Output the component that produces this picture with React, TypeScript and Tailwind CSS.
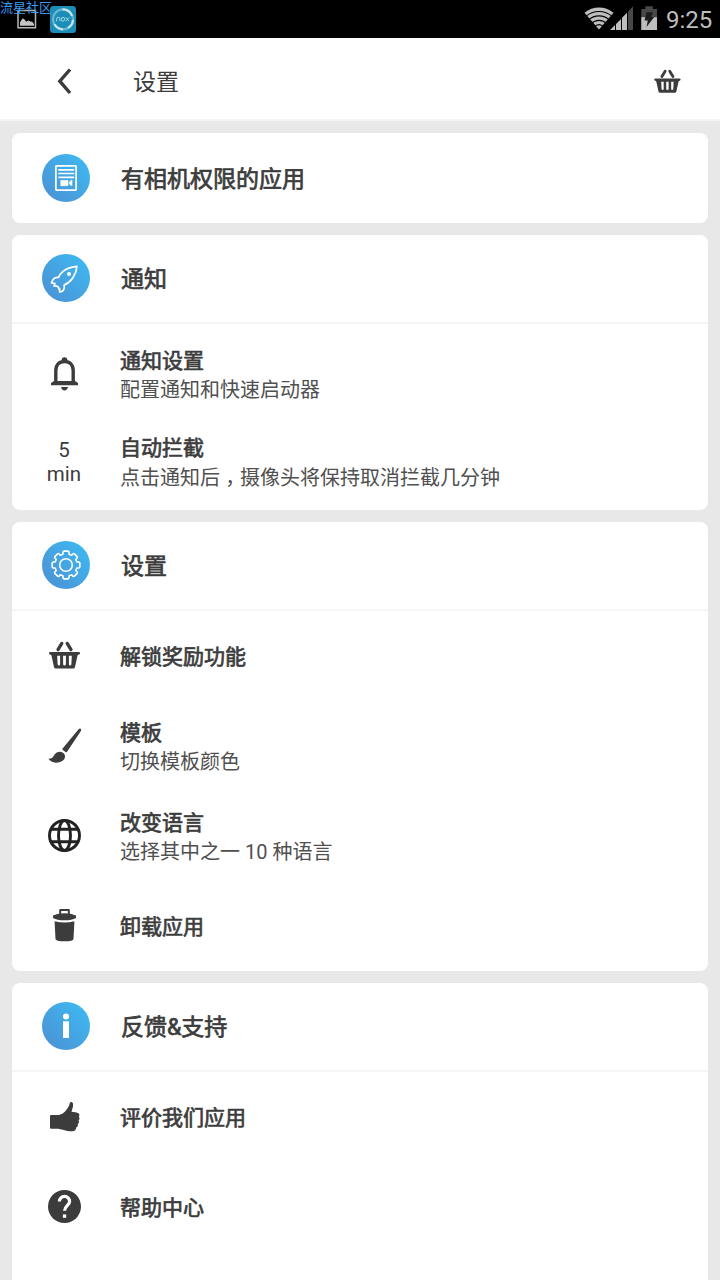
import type { ReactNode } from "react";

type RowProps = {
  icon: ReactNode;
  title: string;
  detail?: ReactNode;
  className?: string;
};

function toothPoint(radius: number, deg: number) {
  const a = (deg * Math.PI) / 180;
  return `${(24 + radius * Math.cos(a)).toFixed(2)} ${(24 + radius * Math.sin(a)).toFixed(2)}`;
}

const GEAR_PATH =
  Array.from({ length: 8 }, (_, i) => {
    const d = i * 45;
    return `${i === 0 ? "M" : "L"}${toothPoint(11.4, d - 15)} L${toothPoint(12.8, d - 13.5)} Q${toothPoint(14, d - 13)} ${toothPoint(14, d - 8)} L${toothPoint(14, d + 8)} Q${toothPoint(14, d + 13)} ${toothPoint(12.8, d + 13.5)} L${toothPoint(11.4, d + 15)} Q${toothPoint(10.8, d + 22.5)} ${toothPoint(11.4, d + 30)}`;
  }).join(" ") + "Z";

function BasketIcon({ className }: { className: string }) {
  return (
    <svg viewBox="0 0 40 40" className={className}>
      <path d="M14 13.600 17.800 7.400M27 13.600 23.200 7.400" stroke="#3c3c3c" strokeWidth="3.300" strokeLinecap="round" />
      <path
        fill="#3c3c3c"
        fillRule="evenodd"
        d="M6.200 16h28.600q1.200 0 1.200 1.200T34.800 18.600l-1.200.7-2.600 11.800q-.3 1.500-1.800 1.500H11.800q-1.500 0-1.800-1.500L7.400 19.300l-1.200-.7Q5 18.400 5 17.200T6.200 16ZM13.200 19.800l.4 8.200q.2 1.500 1.300 1.500t1.200-1.500v-8.200ZM19.100 19.800v8.200q0 1.500 1.400 1.500t1.400-1.500v-8.200ZM24.900 19.800v8.200q.1 1.500 1.200 1.500t1.300-1.500l.4-8.200Z"
      />
    </svg>
  );
}

function BellIcon() {
  return (
    <svg viewBox="0 0 40 40" className="size-10">
      <circle cx="20.500" cy="6" r="2.800" fill="#3c3c3c" />
      <path d="M11.800 28V16.500c0-5.800 3.400-9 8.700-9s8.700 3.200 8.700 9V28" fill="none" stroke="#3c3c3c" strokeWidth="3.400" />
      <path d="M10 27h21l3 2v2.300H7V29z" fill="#3c3c3c" />
      <path d="M17 33h7q-.8 3.400-3.500 3.400T17 33Z" fill="#3c3c3c" />
    </svg>
  );
}

function BrushIcon() {
  return (
    <svg viewBox="0 0 40 40" className="size-10" fill="#3c3c3c">
      <path d="M34.600 3.200q1.200-1.200 2.100-.5.900.8.200 2.200L23.200 25.600q-.6 1-1.700.3l-2.600-1.800q-1-.8-.3-1.700Z" />
      <path d="M4.300 32.700c3 .2 4.300-1 5.600-3.300 1.800-3.300 6-4.800 9-2.700 3 2.100 2.800 5.900-.3 8.100-4 2.900-10.700 2.500-14.300-2.100Z" />
    </svg>
  );
}

function GlobeIcon() {
  return (
    <svg viewBox="0 0 40 40" className="size-10" fill="none" stroke="#222" strokeWidth="2.900">
      <circle cx="20.500" cy="19.500" r="15" />
      <ellipse cx="20.500" cy="19.500" rx="6" ry="15" />
      <path d="M7 13.300h27M7 25.700h27" />
    </svg>
  );
}

function TrashIcon() {
  return (
    <svg viewBox="0 0 40 40" className="size-10" fill="#3c3c3c">
      <path d="M16.200 8.500V4h8.600v4.500" fill="none" stroke="#3c3c3c" strokeWidth="2" strokeLinejoin="round" />
      <path d="M9 9.600Q14 7.300 20.500 7.300T32 9.600v2.300q-4 2.300-11.500 2.300T9 11.900Z" />
      <path d="M10.600 15.300q5 1.200 9.900 1.200t9.900-1.200L29.500 33q-.2 2.300-9 2.300t-9-2.300Z" />
    </svg>
  );
}

function ThumbIcon() {
  return (
    <svg viewBox="0 0 40 40" className="size-10" fill="#3c3c3c">
      <path d="M6 19q0-1 1-1h6.500c4 0 7-2.600 9-5.300 1.400-2 2.500-3.600 3.100-6 .4-1.500 1.600-2.200 2.700-1.200 1.500 1.400.7 4.800-.8 9.200 2.700.2 5.600.9 7 1.600 1.200.8 1.100 2.600.3 3.400 1.200 1.300.7 3-.2 3.700.8 1.400.3 2.900-.9 3.600.6 1.500 0 2.800-1.300 3.300-.2 2.400-1.600 3.900-3.900 4-6.700.1-11.500-2.600-15.500-2.600H7q-1 0-1-1Z" />
    </svg>
  );
}

function HelpIcon() {
  return (
    <svg viewBox="0 0 40 40" className="size-10">
      <circle cx="20.500" cy="19.500" r="16.500" fill="#3c3c3c" />
      <path d="M15.400 14.500a5.100 5.100 0 1 1 10.200 0c0 3.600-5 4.200-5 9.200" fill="none" stroke="#fff" strokeWidth="3.200" />
      <path d="M18.900 27.400h3.300v3.400h-3.300z" fill="#fff" />
    </svg>
  );
}

function Badge({ children }: { children: ReactNode }) {
  return (
    <div className="mr-[31px] ml-[30px] size-12 shrink-0 rounded-full bg-linear-to-tr from-[#4a8fd2] to-[#3bbcf4]">
      <svg viewBox="0 0 48 48" className="size-12" fill="none" stroke="#fff" strokeLinejoin="round" strokeLinecap="round">
        {children}
      </svg>
    </div>
  );
}

function SectionHead({ icon, title }: { icon: ReactNode; title: string }) {
  return (
    <div className="flex h-[89px] items-center border-b-2 border-[#f5f5f5] pb-px">
      <Badge>{icon}</Badge>
      <h2 className="pt-1 text-[23px] leading-8 [-webkit-text-stroke:0.7px]">{title}</h2>
    </div>
  );
}

function Row({ icon, title, detail, className = "h-[90px]" }: RowProps) {
  return (
    <div className={`flex items-center ${className}`}>
      <div className="mr-1 flex w-[104px] shrink-0 justify-center">{icon}</div>
      <div className="pt-0.5">
        <div className="text-[21px] leading-[29px] [-webkit-text-stroke:0.7px]">{title}</div>
        {detail && <div className="text-[20px] leading-7 text-[#505050]">{detail}</div>}
      </div>
    </div>
  );
}

function StatusBar() {
  return (
    <div className="relative flex h-[38px] shrink-0 items-start justify-between bg-black">
      <svg viewBox="0 0 80 38" className="h-[38px] w-20">
        <path d="M18 10.500h17.500v17.300H18z" fill="none" stroke="#b8b8b8" strokeWidth="1.500" />
        <path d="M20 25.700v-3.500l2.600-3.600 1.400.4 2.400 2.800 2.100-1.300 2.300 1.200 1.200-.2 2 2.500v1.700Z" fill="#c4c4c4" />
        <rect x="50" y="6" width="26" height="27" rx="3.500" fill="#1b8eb7" />
        <circle cx="63" cy="19.300" r="10" fill="none" stroke="#67b5d0" strokeWidth="2.200" />
        <path d="M62.500 9.300A10 10 0 0 1 72 16M73 20a10 10 0 0 1-5 8M63 29.300a10 10 0 0 1-8.500-5" fill="none" stroke="#c9e4ee" strokeWidth="2.200" />
        <path d="M56.600 21.200v-2q0-1.900 1.700-1.900t1.700 1.900v2M63 17.300q1.600 0 1.600 1.900T63 21.200t-1.600-2 1.600-1.900ZM65.500 17.300l3.500 3.900M69.200 17.300l-3.500 3.900" fill="none" stroke="#a5d6e7" strokeWidth="1" />
      </svg>
      <div className="flex">
        <svg viewBox="580 0 80 38" className="h-[38px] w-20">
          <path d="M599 29.500 584.500 12.700Q591 7.500 599 7.500t14.500 5.200Z" fill="#bebebe" />
          <path d="M585.500 16.600Q591.500 11.500 599 11.500t13.500 5.100M588.300 20.200Q593 15.900 599 15.900t10.700 4.300M591 23.800Q594.500 20.400 599 20.400t8 3.400M594 27Q596.500 24.600 599 24.600t5 2.400" fill="none" stroke="#000" strokeWidth="1.100" />
          <path d="M610 30l5-5v5ZM616 23.900l5-5V30h-5ZM622 17.800l5-5V30h-5Z" fill="#bebebe" />
          <path d="M628 11.500 633 6.300V30h-5Z" fill="#484848" />
          <path d="M641.300 9h4V6.300h7.500V9h4.200v21h-15.700Z" fill="#484848" />
          <path d="M641.300 17.200H657V30h-15.700Z" fill="#bebebe" />
          <path d="M646.500 12.300h6.500l-1.800 4.700h3l-7.700 10 1.300-6.500h-3.300Z" fill="#1c1c1c" />
        </svg>
        <span className="w-[60px] pl-[6px] text-[24px] leading-[40px] text-[#bebebe]">9:25</span>
      </div>
      <span className="absolute top-px left-0 text-[13px] leading-[13px] text-[#3a9bf5]">流星社区</span>
    </div>
  );
}

export default function App() {
  return (
    <div
      lang="zh-CN"
      className="flex h-[1280px] w-[720px] flex-col overflow-hidden bg-[#e8e8e8] font-[Roboto,'Noto_Sans_CJK_SC',sans-serif] text-[#3c3c3c]"
    >
      <StatusBar />
      <header className="flex h-[83px] shrink-0 items-center border-b-2 border-[#f5f5f5] bg-white pt-1">
        <svg viewBox="0 0 40 40" className="ml-11 size-10">
          <path d="M26 8.500 15.800 20.200 26 32" fill="none" stroke="#3c3c3c" strokeWidth="3.400" />
        </svg>
        <h1 className="ml-[49px] flex-1 pt-1 text-[23px] leading-8">设置</h1>
        <BasketIcon className="mr-[36px] size-[34px] translate-y-px" />
      </header>

      <main className="flex flex-col gap-3 p-3">
        <section className="flex h-[90px] shrink-0 items-center rounded-lg bg-white">
          <Badge>
            <rect x="13.900" y="11.900" width="20.200" height="24.200" rx="0.500" strokeWidth="1.700" />
            <path d="M17 15.800h14.500M17 19.500h14.500M17 23.300h14.500" strokeWidth="1.700" />
            <path d="M19 26.500h7v5.200h-7zM30 26.300v5.500l-2.400-1.600v-2.300Z" fill="#fff" strokeWidth="0.600" />
          </Badge>
          <h2 className="pt-1 text-[23px] leading-8 [-webkit-text-stroke:0.7px]">有相机权限的应用</h2>
        </section>

        <section className="shrink-0 rounded-lg bg-white">
          <SectionHead
            title="通知"
            icon={
              <>
                <path
                  strokeWidth="1.700"
                  d="M34.900 12.400C28.500 13 23.700 15 20.500 17.800c-2.300 2-3.400 3.600-4 5.600-2.500-.2-4 .4-5 1.600-.8 1-1.400 2.300-2 3.800l3.500.7-1 2.400 3 .3 1.500 1 .5 2.200.7-.4v3c1.800-.1 3-.8 3.800-2 1-1.500 1-3 .7-5 3.500-1.500 6.500-4 8.700-7.300 2.300-3.500 3.800-7 4-11.300Z"
                />
                <circle cx="27" cy="20" r="2" fill="#fff" stroke="none" />
              </>
            }
          />
          <div className="pt-1.5 pb-[5px]">
            <Row
              className="h-[88px]"
              icon={<BellIcon />}
              title="通知设置"
              detail="配置通知和快速启动器"
            />
            <Row
              className="h-[87px]"
              icon={
                <div className="pt-px text-center text-[20.500px] leading-6">
                  5<br />
                  min
                </div>
              }
              title="自动拦截"
              detail={
                <>
                  点击通知后
                  <span lang="zh-TW" className="relative top-[6px] font-['Noto_Sans_CJK_TC',sans-serif]">
                    ，
                  </span>
                  摄像头将保持取消拦截几分钟
                </>
              }
            />
          </div>
        </section>

        <section className="shrink-0 rounded-lg bg-white">
          <SectionHead
            title="设置"
            icon={
              <>
                <path d={GEAR_PATH} strokeWidth="1.600" />
                <circle cx="24" cy="24" r="6.300" strokeWidth="1.600" />
              </>
            }
          />
          <Row icon={<BasketIcon className="size-10" />} title="解锁奖励功能" />
          <Row icon={<BrushIcon />} title="模板" detail="切换模板颜色" />
          <Row icon={<GlobeIcon />} title="改变语言" detail="选择其中之一 10 种语言" />
          <Row icon={<TrashIcon />} title="卸载应用" />
        </section>

        <section className="h-[360px] shrink-0 rounded-lg bg-white">
          <SectionHead
            title="反馈&支持"
            icon={
              <g fill="#fff" stroke="none">
                <circle cx="24" cy="14.500" r="3" />
                <path d="M21 19.300h6V36h-6z" />
              </g>
            }
          />
          <Row icon={<ThumbIcon />} title="评价我们应用" />
          <Row icon={<HelpIcon />} title="帮助中心" />
        </section>
      </main>
    </div>
  );
}
